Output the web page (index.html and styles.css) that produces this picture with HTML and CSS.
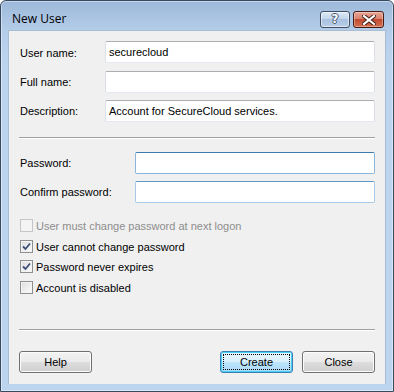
FILE: index.html
```html
<!DOCTYPE html>
<html>
<head>
<meta charset="utf-8">
<link rel="stylesheet" href="styles.css">
</head>
<body>
<div class="window">
  <div class="titlebar">
    <span class="title">New User</span>
    <div class="caption-buttons">
      <div class="cap-btn help-cap"><span>?</span></div>
      <div class="cap-btn close-cap">
        <svg width="14" height="10" viewBox="0 0 14 10">
          <path d="M2 1 L12 9 M12 1 L2 9" stroke="#3a1a14" stroke-width="4" stroke-linecap="square"/>
          <path d="M2 1 L12 9 M12 1 L2 9" stroke="#ffffff" stroke-width="2.2" stroke-linecap="square"/>
        </svg>
      </div>
    </div>
  </div>
  <div class="client">
    <div class="form top-form">
      <label class="lbl">User name:</label>
      <div class="field"><span>securecloud</span></div>
      <label class="lbl">Full name:</label>
      <div class="field"></div>
      <label class="lbl">Description:</label>
      <div class="field"><span>Account for SecureCloud services.</span></div>
    </div>
    <div class="sep sep-top"></div>
    <div class="form pw-form">
      <label class="lbl">Password:</label>
      <div class="field focus"></div>
      <label class="lbl">Confirm password:</label>
      <div class="field hot"></div>
    </div>
    <div class="checks">
      <div class="check disabled"><span class="box"></span><span>User must change password at next logon</span></div>
      <div class="check"><span class="box checked"><svg width="9" height="9" viewBox="0 0 9 9"><path d="M1 4.5 L3.5 7 L8 1.5" fill="none" stroke="#3d4f7a" stroke-width="1.8"/></svg></span><span>User cannot change password</span></div>
      <div class="check"><span class="box checked"><svg width="9" height="9" viewBox="0 0 9 9"><path d="M1 4.5 L3.5 7 L8 1.5" fill="none" stroke="#3d4f7a" stroke-width="1.8"/></svg></span><span>Password never expires</span></div>
      <div class="check"><span class="box"></span><span>Account is disabled</span></div>
    </div>
    <div class="sep sep-bottom"></div>
    <div class="buttons">
      <button class="btn">Help</button>
      <div class="spacer"></div>
      <button class="btn default"><span class="focus-rect">Create</span></button>
      <button class="btn">Close</button>
    </div>
  </div>
</div>
</body>
</html>
```
FILE: styles.css
```css
* { box-sizing: border-box; }
html, body { margin: 0; padding: 0; background: #ffffff; }
body { width: 394px; height: 392px; overflow: hidden; font-family: "Liberation Sans", Arial, sans-serif; font-size: 11px; color: #000; }

.window {
  width: 394px; height: 392px;
  border: 1px solid #36495f;
  border-radius: 6px 6px 0 0;
  background: linear-gradient(to bottom, #9db8d9 0px, #b4cde9 30px, #bdd4ee 60px, #bdd4ee 100%);
  box-shadow: inset 0 0 0 1px rgba(255,255,255,0.45);
  display: flex; flex-direction: column;
}

.titlebar {
  height: 29px; flex: none;
  display: flex; align-items: flex-start;
  padding-left: 11px;
}
.title {
  font-family: "Segoe UI", "Open Sans", "DejaVu Sans", sans-serif;
  font-size: 12px; color: #000; line-height: 16px;
  margin-top: 10px;
}
.caption-buttons {
  margin-left: auto; display: flex; gap: 3px;
  margin-top: 10px; margin-right: 9px;
}
.cap-btn {
  height: 17px; border: 1px solid #3e4d63; border-radius: 3px;
  display: flex; align-items: center; justify-content: center;
}
.help-cap {
  width: 30px;
  background: linear-gradient(to bottom, #dce8f5 0%, #c4d6ec 45%, #a9c1df 50%, #b9cfe9 100%);
  box-shadow: inset 0 0 0 1px rgba(255,255,255,0.55);
}
.help-cap span {
  font-family: "DejaVu Sans", sans-serif; font-weight: bold; font-size: 12px;
  color: #fff; line-height: 13px;
  text-shadow: 1px 0 0 #44566e, -1px 0 0 #44566e, 0 1px 0 #44566e, 0 -1px 0 #44566e;
}
.close-cap {
  width: 31px;
  border-color: #4a1a10;
  background: linear-gradient(to bottom, #e8a595 0%, #d8826d 45%, #c14a32 50%, #d2704f 100%);
  box-shadow: inset 0 0 0 1px rgba(255,255,255,0.35);
}

.client {
  flex: 1;
  margin: 0 7px 7px 7px;
  background: #f0f0f0;
  border: 1px solid #a8bcd4;
  border-bottom: none;
  padding: 10px 10px 0 10px;
  display: flex; flex-direction: column;
}

.form {
  display: grid;
  grid-template-columns: 1fr 270px;
  row-gap: 7px;
}
.top-form { grid-template-rows: 23px 22px 22px; }
.pw-form { grid-template-columns: 1fr 240px; grid-template-rows: 22px 22px; }
.lbl { padding-left: 1px; align-self: center; }

.field {
  height: 22px;
  align-self: start;
  background: #fff;
  border: 1px solid #dbdfe6;
  border-top-color: #abadb3;
  border-bottom-color: #e3e9ef;
  border-radius: 2px;
  padding: 0 3px;
  display: flex; align-items: center;
}
.field span { line-height: 13px; }
.field.focus { border-color: #8ab6dc; border-top-color: #3d7bad; }
.field.hot { border-color: #a8cae8; border-top-color: #5f98c8; }

.sep {
  height: 2px; flex: none;
  border-top: 1px solid #a0a0a0;
  border-bottom: 1px solid #ffffff;
}
.sep-top { margin: 15px 0 13px 0; }
.sep-bottom { margin-top: auto; margin-bottom: 20px; }

.checks { margin-top: 16px; display: flex; flex-direction: column; }
.check { display: flex; align-items: center; height: 13px; padding-left: 1px; }
.check + .check { margin-top: 8px; }
.check:nth-child(3) { margin-top: 7px; }
.check.disabled { color: #8d8d8d; }
.box {
  width: 13px; height: 13px; flex: none;
  border: 1px solid #8e8f8f;
  background: linear-gradient(135deg, #dcdcdc 0%, #f0f0f0 60%, #fdfdfd 100%);
  box-shadow: inset 0 0 0 1px #f4f4f4;
  margin-right: 3px;
  display: flex; align-items: center; justify-content: center;
}
.disabled .box { border-color: #c5c5c5; background: #f4f4f4; box-shadow: none; }

.buttons { display: flex; gap: 9px; margin-bottom: 11px; flex: none; }
.spacer { flex: 1; }
.btn {
  width: 73px; height: 22px;
  font-family: "Liberation Sans", Arial, sans-serif; font-size: 11px; color: #000;
  border: 1px solid #707070; border-radius: 3px;
  background: linear-gradient(to bottom, #f2f2f2 0%, #ebebeb 48%, #dddddd 52%, #cfcfcf 100%);
  box-shadow: inset 0 0 0 1px #fcfcfc;
  padding: 0;
  display: flex; align-items: center; justify-content: center;
}
.btn.default {
  border-color: #3c7fb1;
  background: linear-gradient(to bottom, #eaf6fd 0%, #d9f0fc 48%, #bee6fd 52%, #a7d9f5 100%);
  box-shadow: inset 0 0 0 1px #48d0f5;
  padding: 2px;
}
.focus-rect {
  width: 100%; height: 100%;
  border: 1px dotted #000;
  display: flex; align-items: center; justify-content: center;
}
```
